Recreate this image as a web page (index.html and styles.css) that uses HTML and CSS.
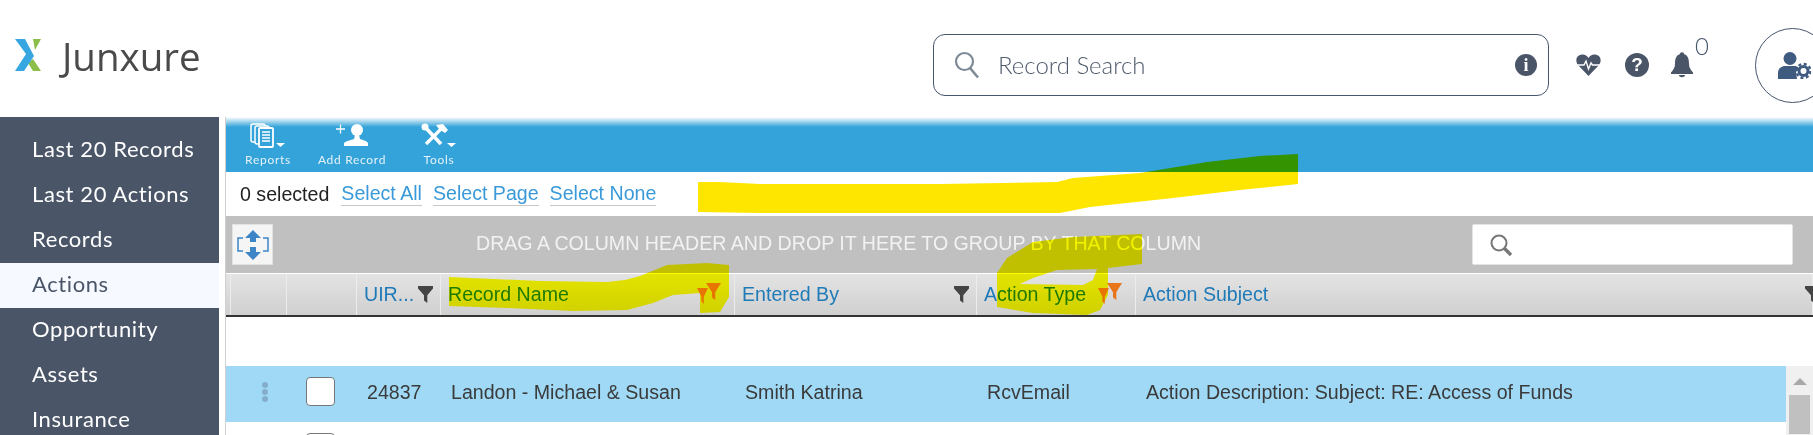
FILE: index.html
```html
<!doctype html>
<html>

<head>
	<meta charset="utf-8">
	<title>Junxure</title>
	<link rel="stylesheet" href="styles.css">
</head>

<body>
	<!--header-->
	<header class="top">
		<div class="logo">
			<svg class="logo-mark" width="27" height="33" viewBox="0 0 27 33">
				<polygon points="18,0 26,0 20,11" fill="#8cbf4a"/>
				<polygon points="18,20 26,32 18,32 13,24" fill="#8cbf4a"/>
				<polygon points="0,0 10,0 19,17 9,32 0,32 11,15" fill="#38a6e0"/>
			</svg>
			<span class="logo-text">Junxure</span>
		</div>
		<div class="search">
			<svg class="search-icon" width="26" height="28" viewBox="0 0 26 28">
				<circle cx="10.500" cy="10.500" r="8.500" fill="none" stroke="#7d8a96" stroke-width="2.200"/>
				<line x1="16" y1="17" x2="24" y2="26.500" stroke="#7d8a96" stroke-width="2.600"/>
			</svg>
			<span class="search-text">Record Search</span>
			<span class="info-icon">i</span>
		</div>
		<div class="top-icons">
			<svg class="heart" width="25" height="22" viewBox="0 0 25 22">
				<path d="M12.500 22 L2 11 C-1 7 0 1 6 0.500 C9 0.300 11 1.500 12.500 4 C14 1.500 16 0.300 19 0.500 C25 1 26 7 23 11 Z" fill="#4a5568"/>
				<polyline points="1,11 8,11 10,7 12.500,15 15,9 16.500,11 24,11" fill="none" stroke="#fff" stroke-width="1.400"/>
			</svg>
			<span class="help-icon">?</span>
			<svg class="bell" width="22" height="26" viewBox="0 0 22 26">
				<circle cx="11" cy="2.500" r="2.200" fill="#4a5568"/>
				<path d="M11 2 C17 2 18 7 18 12 C18 16 20 18 22 20.500 L22 22 L0 22 L0 20.500 C2 18 4 16 4 12 C4 7 5 2 11 2 Z" fill="#4a5568"/>
				<path d="M8 23 L14 23 C14 26 8 26 8 23 Z" fill="#4a5568"/>
			</svg>
			<span class="bell-count">0</span>
		</div>
		<div class="user-circle">
			<svg width="33" height="27" viewBox="0 0 33 27">
				<circle cx="12" cy="6.500" r="6.500" fill="#3f5b80"/>
				<path d="M0 27 L0 21 C0 16 4 14 7 14 L17 14 C19 14 20 15 21 16 L18 20 L19 27 Z" fill="#3f5b80"/>
				<circle cx="25.500" cy="19" r="4.500" fill="none" stroke="#3f5b80" stroke-width="3"/>
				<circle cx="25.500" cy="19" r="7" fill="none" stroke="#3f5b80" stroke-width="2.400" stroke-dasharray="3 2.500"/>
			</svg>
		</div>
	</header>

	<div class="page">
		<!--sidebar-->
		<ul class="side">
			<li>Last 20 Records</li>
			<li>Last 20 Actions</li>
			<li>Records</li>
			<li class="active">Actions</li>
			<li>Opportunity</li>
			<li>Assets</li>
			<li>Insurance</li>
		</ul>

		<div class="main">
			<!--toolbar-->
			<div class="toolbar">
				<div class="tool tool-reports">
					<svg width="36" height="26" viewBox="0 0 36 26">
						<rect x="1" y="1" width="14" height="18" rx="2" fill="none" stroke="#fff" stroke-width="1.500"/>
						<rect x="5" y="3" width="14" height="18" rx="2" fill="#34a3d9" stroke="#fff" stroke-width="1.500"/>
						<rect x="9" y="5" width="14" height="19" rx="1" fill="#34a3d9" stroke="#fff" stroke-width="1.800"/>
						<path d="M12 9 H20 M12 12 H20 M12 15 H20 M12 18 H20" stroke="#fff" stroke-width="1.300"/>
						<polygon points="26,20 35,20 30.500,24" fill="#fff"/>
					</svg>
					<span>Reports</span>
				</div>
				<div class="tool tool-add">
					<svg width="34" height="26" viewBox="0 0 34 26">
						<path d="M1 6 H10 M5.500 1.500 V10.500" stroke="#fff" stroke-width="1.300"/>
						<circle cx="22" cy="7" r="6" fill="#fff"/>
						<path d="M20 12 L24 12 L25 16 C28 17 32 18 33 20 L33 23 L9 23 L9 20 C11 18 16 17 19 16 Z" fill="#fff"/>
					</svg>
					<span>Add Record</span>
				</div>
				<div class="tool tool-tools">
					<svg width="36" height="26" viewBox="0 0 36 26">
						<path d="M3 3 L20 21" stroke="#fff" stroke-width="3.600"/>
						<path d="M5 21 L20 6" stroke="#fff" stroke-width="3.200"/>
						<path d="M15 2 L22 1 L27 7 L24 10 L18 6 Z" fill="#fff"/>
						<circle cx="4" cy="4" r="3.500" fill="#fff"/>
						<polygon points="26,20 35,20 30.500,24" fill="#fff"/>
					</svg>
					<span>Tools</span>
				</div>
			</div>

			<!--selection links-->
			<div class="select-row">
				<span class="selected">0 selected</span>
				<a class="sel-link">Select All</a>
				<a class="sel-link">Select Page</a>
				<a class="sel-link">Select None</a>
			</div>

			<!--group bar-->
			<div class="group-bar">
				<div class="expand-btn">
					<svg width="32" height="32" viewBox="0 0 32 32">
						<path d="M6 9 H1 V22 H6 M26 9 H31 V22 H26" fill="none" stroke="#3d85c6" stroke-width="1.500"/>
						<polygon points="16,1 24,9 19,9 19,13 13,13 13,9 8,9" fill="#3d85c6"/>
						<polygon points="16,31 24,23 19,23 19,18 13,18 13,23 8,23" fill="#3d85c6"/>
					</svg>
				</div>
				<div class="group-text">DRAG A COLUMN HEADER AND DROP IT HERE TO GROUP BY THAT COLUMN</div>
				<div class="grid-search">
					<svg width="24" height="24" viewBox="0 0 24 24">
						<circle cx="10" cy="10" r="7.500" fill="none" stroke="#777" stroke-width="2"/>
						<line x1="15.500" y1="15.500" x2="22" y2="22" stroke="#777" stroke-width="3.400"/>
					</svg>
				</div>
			</div>

			<!--column headers-->
			<div class="cols head">
				<div class="th"></div>
				<div class="th"></div>
				<div class="th"></div>
				<div class="th"><span>UIR...</span><i class="funnel"></i></div>
				<div class="th"><span>Record Name</span><i class="funnels"></i></div>
				<div class="th"><span>Entered By</span><i class="funnel"></i></div>
				<div class="th"><span>Action Type</span><i class="funnels"></i></div>
				<div class="th"><span>Action Subject</span><i class="funnel funnel-last"></i></div>
			</div>

			<div class="grid-body">
				<div class="rows">
					<div class="cols row selected-row">
						<div class="td"></div>
						<div class="td td-dots"><b></b><b></b><b></b></div>
						<div class="td td-check"><span class="check"></span></div>
						<div class="td">24837</div>
						<div class="td">Landon - Michael &amp; Susan</div>
						<div class="td">Smith Katrina</div>
						<div class="td">RcvEmail</div>
						<div class="td">Action Description: Subject: RE: Access of Funds</div>
					</div>
					<div class="cols row">
						<div class="td"></div>
						<div class="td"></div>
						<div class="td td-check"><span class="check"></span></div>
					</div>
				</div>
				<div class="scroll">
					<div class="scroll-up"></div>
					<div class="scroll-thumb"></div>
				</div>
			</div>
		</div>
	</div>

	<!--marker scribbles on top of the screenshot-->
	<svg class="marks" width="1813" height="435" viewBox="0 0 1813 435">
		<path fill="#ffe600" d="M698 182 L720 182 L760 184 L940 184 L1057 182 L1073 178 L1140 173 L1207 162 L1260 156 L1298 154 L1298 184 L1240 190 L1173 198 L1090 207 L1060 213 L940 213 L760 213 L698 212 Z"/>
		<path fill="#ffff00" d="M449 277 L540 281 L607 282 L625 280 L640 276 L667 265 L707 263 L729 265 L729 297 L720 312 L700 313 L700 293 L673 295 L653 303 L627 310 L573 311 L507 308 L449 306 Z"/>
		<path fill="#ffff00" fill-rule="evenodd" d="M1142 234 L1073 237 L1033 242 L1007 258 L997 273 L997 307 L1033 313 L1087 315 L1100 310 L1108 295 L1108 268 L1142 264 Z M1097 269 L1057 270 L1033 278 L1020 284 L1083 285 L1093 280 Z"/>
	</svg>
</body>

</html>
```

FILE: styles.css
```css
html,
body {
	margin: 0;
	height: 435px;
	overflow: hidden;
	background: #fff;
}

body {
	position: relative;
	font-family: "Liberation Sans", Arial, sans-serif;
}

/* header */
.top {
	display: flex;
	align-items: center;
	box-sizing: border-box;
	height: 117px;
	padding-top: 13px;
}

.logo {
	display: flex;
	align-items: center;
	flex: none;
	box-sizing: border-box;
	width: 933px;
	padding: 0 0 19px 15px;
}

.logo-mark {
	margin-right: 20px;
}

.logo-text {
	font-family: "Open Sans", sans-serif;
	font-size: 38.5px;
	font-weight: 500;
	line-height: 40px;
	color: #4a4a4a;
}

.search {
	display: flex;
	align-items: center;
	flex: none;
	box-sizing: border-box;
	width: 616px;
	height: 62px;
	padding: 0 11px 0 20px;
	border: 1px solid #46566b;
	border-radius: 12px;
}

.search-text {
	flex: 1;
	margin-left: 18px;
	padding-bottom: 2px;
	font-family: Lato, sans-serif;
	font-size: 24px;
	font-weight: 300;
	color: #4f5b6b;
}

.info-icon,
.help-icon {
	display: block;
	border-radius: 50%;
	background: #4a5568;
	color: #fff;
	text-align: center;
	font-weight: bold;
}

.info-icon {
	width: 22px;
	height: 22px;
	font-family: "Liberation Serif", serif;
	font-size: 18px;
	line-height: 22px;
}

.top-icons {
	display: flex;
	align-items: center;
	flex: none;
	margin-left: 27px;
}

.help-icon {
	width: 24px;
	height: 24px;
	margin-left: 24px;
	font-size: 19px;
	line-height: 24px;
}

.bell {
	margin-left: 22px;
}

.bell-count {
	align-self: flex-start;
	margin: -18px 0 0 2px;
	font-family: Lato, sans-serif;
	font-size: 24px;
	font-weight: 300;
	line-height: 24px;
	color: #46566b;
}

.user-circle {
	display: flex;
	align-items: center;
	flex: none;
	box-sizing: border-box;
	width: 75px;
	height: 75px;
	margin-left: 46px;
	padding-left: 22px;
	border: 1px solid #46566b;
	border-radius: 50%;
}

/* page */
.page {
	display: flex;
	height: 318px;
}

.side {
	flex: none;
	width: 219px;
	margin: 0;
	padding: 11px 0 0;
	list-style: none;
	background: #4a5568;
}

.side>li {
	height: 45px;
	padding-left: 32px;
	font-family: Lato, sans-serif;
	font-size: 22px;
	letter-spacing: 0.6px;
	line-height: 42px;
	color: #fff;
}

.side>li.active {
	background: #f6f9ff;
	color: #4a5568;
}

.main {
	flex: none;
	width: 1587px;
	margin-left: 6px;
	border-left: 1px solid #d0d0d0;
	overflow: hidden;
}

/* toolbar */
.toolbar {
	display: flex;
	height: 55px;
	margin-left: -1px;
	background: linear-gradient(#fff 0, #34a3d9 10px);
}

.tool {
	display: flex;
	flex-direction: column;
	align-items: center;
	color: #e4f2fa;
	font-family: Lato, sans-serif;
	font-size: 12px;
	letter-spacing: 0.7px;
	line-height: 14px;
}

.tool>svg {
	display: block;
	margin-top: 6px;
	margin-bottom: 4px;
}

.tool-reports {
	width: 46px;
	margin-left: 20px;
}

.tool-add {
	width: 70px;
	margin-left: 26px;
}

.tool-tools {
	width: 36px;
	margin-left: 34px;
}

/* selection row */
.select-row {
	display: flex;
	align-items: center;
	height: 44px;
	padding-left: 14px;
	font-size: 19.6px;
}

.selected {
	margin-right: 12px;
	color: #222;
}

.sel-link {
	margin-right: 11px;
	color: #3a9ad9;
	border-bottom: 1px solid #c8c8c8;
}

/* group bar */
.group-bar {
	display: flex;
	align-items: center;
	height: 57px;
	background: #c0c0c0;
}

.expand-btn {
	display: flex;
	align-items: center;
	justify-content: center;
	flex: none;
	box-sizing: border-box;
	width: 41px;
	height: 41px;
	margin-left: 6px;
	background: #f5f5f5;
	border: 1px solid #e2e2e2;
}

.group-text {
	flex: none;
	width: 724px;
	margin-left: 203px;
	padding-bottom: 2px;
	font-size: 19.6px;
	color: #f2f2f2;
	white-space: nowrap;
}

.grid-search {
	display: flex;
	align-items: center;
	flex: none;
	box-sizing: border-box;
	width: 321px;
	height: 41px;
	margin-left: 272px;
	padding-left: 16px;
	background: #fff;
	border: 1px solid #e4e4e4;
	border-radius: 2px;
}

/* grid */
.cols {
	display: grid;
	grid-template-columns: 5px 56px 70px 84px 294px 242px 159px 1fr;
}

.head {
	box-sizing: border-box;
	height: 43px;
	margin-top: 1px;
	background: linear-gradient(#e3e3e3, #d0d0d0);
	border-bottom: 2px solid #333;
}

.th {
	display: flex;
	align-items: center;
	position: relative;
	box-sizing: border-box;
	padding-left: 7px;
	border-right: 1px solid #ececec;
	font-size: 19.6px;
	color: #1f7ab8;
	white-space: nowrap;
}

.th:empty {
	padding-left: 0;
}

.funnel {
	position: absolute;
	top: 12px;
	right: 7px;
	width: 15px;
	height: 17px;
	background: #444;
	clip-path: polygon(0 0, 100% 0, 100% 15%, 62% 55%, 62% 100%, 40% 85%, 40% 55%, 0 15%);
}

.funnel-last {
	right: auto;
	left: 669px;
}

.funnels::before,
.funnels::after {
	content: "";
	position: absolute;
	background: #e8751a;
	clip-path: polygon(0 0, 100% 0, 62% 55%, 62% 100%, 40% 85%, 40% 55%);
}

.funnels::before {
	top: 9px;
	right: 13px;
	width: 15px;
	height: 17px;
}

.funnels::after {
	top: 14px;
	right: 26px;
	width: 11px;
	height: 16px;
}

.grid-body {
	display: flex;
	box-sizing: border-box;
	height: 118px;
	padding-top: 49px;
}

.rows {
	flex: 1;
	overflow: hidden;
}

.row {
	height: 56px;
}

.selected-row {
	background: #9fd9f5;
}

.td {
	display: flex;
	align-items: center;
	box-sizing: border-box;
	padding: 0 0 4px 10px;
	font-size: 19.6px;
	color: #3a3a3a;
	white-space: nowrap;
}

.td-dots {
	flex-direction: column;
	justify-content: center;
	align-items: flex-start;
	gap: 1px;
	padding-left: 31px;
}

.td-dots>b {
	display: block;
	width: 6px;
	height: 6px;
	border-radius: 50%;
	background: #85aecb;
}

.td-check {
	align-items: flex-start;
	padding: 11px 0 0 19px;
}

.check {
	display: block;
	flex: none;
	box-sizing: border-box;
	width: 29px;
	height: 29px;
	background: #fff;
	border: 1px solid #777;
	border-radius: 4px;
}

.scroll {
	flex: none;
	width: 27px;
	background: #f0f0f0;
}

.scroll-up {
	width: 0;
	height: 0;
	margin: 12px auto 0;
	border-left: 7px solid transparent;
	border-right: 7px solid transparent;
	border-bottom: 7px solid #a8a8a8;
}

.scroll-thumb {
	height: 39px;
	margin: 10px 3px 0;
	background: #c0c0c0;
}

/* scribbles */
.marks {
	position: absolute;
	left: 0;
	top: 0;
	mix-blend-mode: multiply;
	pointer-events: none;
}
```
